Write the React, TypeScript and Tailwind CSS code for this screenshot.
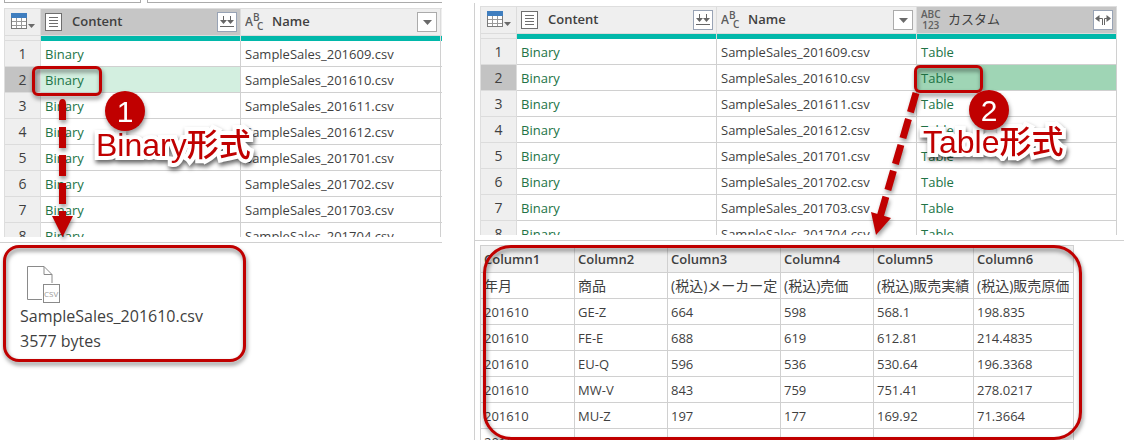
import React from 'react';
import clsx from 'clsx';

type ColumnKind = 'binary' | 'text' | 'any';

interface Column {
  key: string;
  title: string;
  kind: ColumnKind;
}

interface QueryGridProps {
  columns: Column[];
  selectedColumn: string;
  highlight: string;
  trailing?: boolean;
}

const months = ['201609', '201610', '201611', '201612', '201701', '201702', '201703', '201704'];

const contentColumn: Column = { key: 'content', title: 'Content', kind: 'binary' };
const nameColumn: Column = { key: 'name', title: 'Name', kind: 'text' };
const customColumn: Column = { key: 'custom', title: 'カスタム', kind: 'any' };

const previewRows = [
  ['年月', '商品', '(税込)メーカー定価', '(税込)売価', '(税込)販売実績', '(税込)販売原価'],
  ['201610', 'GE-Z', '664', '598', '568.1', '198.835'],
  ['201610', 'FE-E', '688', '619', '612.81', '214.4835'],
  ['201610', 'EU-Q', '596', '536', '530.64', '196.3368'],
  ['201610', 'MW-V', '843', '759', '751.41', '278.0217'],
  ['201610', 'MU-Z', '197', '177', '169.92', '71.3664'],
  ['201610', '', '', '', '', ''],
];

const TableMenuIcon = () => (
  <svg width="25" height="18" viewBox="0 0 25 18">
    <rect x="0.5" y="1.5" width="15" height="14" fill="#fff" stroke="#7a7a7a" />
    <path d="M5.500 5v10M10.500 5v10M1 8.500h14M1 12.500h14" stroke="#9a9a9a" />
    <rect x="0" y="0" width="16" height="5" fill="#3f7ebf" />
    <path d="M17 11h7l-3.500 4z" fill="#6a6a6a" />
  </svg>
);

const BinaryIcon = () => (
  <svg width="17" height="18" viewBox="0 0 17 18">
    <rect x="0.5" y="0.5" width="16" height="17" fill="#fff" stroke="#6e6e6e" />
    <path d="M4 4.500h9M4 7.500h9M4 10.500h9M4 13.500h9" stroke="#6e6e6e" />
  </svg>
);

const TextIcon = () => (
  <svg width="22" height="22" viewBox="0 0 22 22" className="font-semibold" fill="#5c5c5c">
    <text x="0" y="15" fontSize="12">A</text>
    <text x="8" y="10" fontSize="10">B</text>
    <text x="12" y="19" fontSize="10">C</text>
  </svg>
);

const KindIcon: React.FC<{ kind: ColumnKind }> = ({ kind }) => {
  if (kind === 'binary') return <BinaryIcon />;
  if (kind === 'text') return <TextIcon />;
  return (
    <span className="flex flex-col text-[10px] leading-[11px] font-semibold text-[#606060]">
      <span>ABC</span>
      <span>123</span>
    </span>
  );
};

const HeaderAction: React.FC<{ kind: ColumnKind }> = ({ kind }) => (
  <button
    type="button"
    aria-label="Column options"
    className={clsx(
      'ml-auto flex size-5 shrink-0 items-center justify-center border bg-white',
      kind === 'text' ? 'border-[#ababab]' : 'border-[#98a3b5]'
    )}
  >
    {kind === 'binary' && (
      <svg width="16" height="14" viewBox="0 0 16 14" fill="#666">
        <path d="M4 1h1v5h-1zM11 1h1v5h-1zM1 5h7l-3.500 4zM8 5h7l-3.500 4z" />
        <path d="M1 11h14v1H1z" />
      </svg>
    )}
    {kind === 'text' && (
      <svg width="9" height="5" viewBox="0 0 9 5">
        <path d="M0 0h9L4.500 5z" fill="#6a6a6a" />
      </svg>
    )}
    {kind === 'any' && (
      <svg width="16" height="12" viewBox="0 0 16 12">
        <path d="M0 4.500L4.500 1v7zM16 4.500L11.500 1v7z" fill="#666" />
        <path d="M4 4.500h3.500V11M9.500 11V4.500H12" fill="none" stroke="#666" />
      </svg>
    )}
  </button>
);

const QueryGrid: React.FC<QueryGridProps> = ({ columns, selectedColumn, highlight, trailing }) => {
  const cellText = (key: string, month: string) => {
    if (key === 'content') return 'Binary';
    if (key === 'custom') return 'Table';
    return `SampleSales_${month}.csv`;
  };

  return (
    <div className="h-[229px] overflow-hidden">
      <table
        className={clsx(
          'table-fixed border-separate border-spacing-0 border-t border-l border-[#dedede]',
          trailing ? 'w-full' : 'w-0'
        )}
      >
        <colgroup>
          <col className="w-9" />
          {columns.map((column) => (
            <col key={column.key} className="w-[200px]" />
          ))}
          {trailing && <col />}
        </colgroup>
        <thead>
          <tr className="h-[27px] bg-[#efefef]">
            <th className="border-r border-b border-[#dcdcdc] p-0">
              <button type="button" aria-label="Table menu" className="flex pl-1.5">
                <TableMenuIcon />
              </button>
            </th>
            {columns.map((column) => (
              <th
                key={column.key}
                className={clsx(
                  'border-r border-b border-[#dcdcdc] p-0',
                  column.key === selectedColumn && 'bg-[#c6c6c6]'
                )}
              >
                <div className="flex items-center pr-[3px] pl-1">
                  <span className="flex w-[27px] shrink-0">
                    <KindIcon kind={column.kind} />
                  </span>
                  <span className={column.kind === 'any' ? 'font-normal' : 'font-semibold'}>
                    {column.title}
                  </span>
                  <HeaderAction kind={column.kind} />
                </div>
              </th>
            ))}
            {trailing && <th className="border-b border-[#dcdcdc] p-0" />}
          </tr>
          <tr className="h-[5px]">
            <td className="border-r border-b border-[#dcdcdc] bg-[#efefef] p-0" />
            {columns.map((column) => (
              <td key={column.key} className="border-r border-[#dcdcdc] bg-[#01b8aa] p-0" />
            ))}
            {trailing && <td className="bg-[#01b8aa] p-0" />}
          </tr>
        </thead>
        <tbody>
          {months.map((month, index) => (
            <tr key={month} className="h-[26px]">
              <th
                className={clsx(
                  'border-r border-b border-[#dcdcdc] p-0 text-center text-[14px] leading-5 font-normal',
                  index === 1 ? 'bg-[#c3c3c3]' : 'bg-[#efefef]'
                )}
              >
                {index + 1}
              </th>
              {columns.map((column) => (
                <td
                  key={column.key}
                  className={clsx(
                    'border-r border-b border-[#d0d0d0] px-1 py-0 leading-5 whitespace-nowrap',
                    column.kind !== 'text' && 'text-[#217346]',
                    index === 1 && column.key === selectedColumn && highlight
                  )}
                >
                  {cellText(column.key, month)}
                </td>
              ))}
              {trailing && <td className="border-b border-[#d0d0d0] p-0" />}
            </tr>
          ))}
        </tbody>
      </table>
    </div>
  );
};

const PreviewTable = () => (
  <table className="w-[594px] table-fixed border-separate border-spacing-0 border-t border-l border-[#d0d0d0]">
    <colgroup>
      <col className="w-[94px]" />
      <col className="w-[93px]" />
      <col className="w-[113px]" />
      <col className="w-[93px]" />
      <col className="w-[100px]" />
      <col className="w-[100px]" />
    </colgroup>
    <thead>
      <tr className="h-[27px] bg-[#efefef]">
        {previewRows[0].map((_, index) => (
          <th
            key={index}
            className="border-r border-b border-[#d0d0d0] px-[3px] py-0 text-left leading-5 font-semibold"
          >
            Column{index + 1}
          </th>
        ))}
      </tr>
    </thead>
    <tbody>
      {previewRows.map((row, rowIndex) => (
        <tr key={rowIndex} className="h-[26px]">
          {row.map((value, index) => (
            <td key={index} className="border-r border-b border-[#d0d0d0] px-[3px] py-0">
              <div
                className={clsx(
                  'h-5 overflow-hidden leading-5 whitespace-nowrap',
                  rowIndex === 0 && 'text-[14px]'
                )}
              >
                {value}
              </div>
            </td>
          ))}
        </tr>
      ))}
    </tbody>
  </table>
);

const Frame: React.FC<{ className: string }> = ({ className }) => (
  <div
    className={clsx(
      'pointer-events-none absolute border-3 border-[#c00000] drop-shadow-[1px_3px_2px_rgba(0,0,0,0.5)]',
      className
    )}
  />
);

const StepBadge: React.FC<{ step: number; className: string }> = ({ step, className }) => (
  <span
    className={clsx(
      'absolute flex size-10 items-center justify-center rounded-full bg-[#c00000] font-["Liberation_Sans",sans-serif] text-[30px] text-white drop-shadow-[1px_3px_2px_rgba(0,0,0,0.4)]',
      className
    )}
  >
    {step}
  </span>
);

const Callout: React.FC<{ text: string; className: string }> = ({ text, className }) => (
  <span
    className={clsx(
      'absolute font-["Liberation_Sans","Noto_Sans_CJK_JP",sans-serif] text-[32px] leading-10 font-medium whitespace-nowrap text-[#c00000] drop-shadow-[1px_3px_2px_rgba(0,0,0,0.6)] [-webkit-text-stroke:8px_white] [paint-order:stroke_fill]',
      className
    )}
  >
    {text}
  </span>
);

const FileIcon = () => (
  <svg width="34" height="38" viewBox="0 0 34 38" fill="none" stroke="#8a8a8a">
    <path d="M15 33.500H0.500V0.500H17l8 8V17M17 0.500V8.500H25" />
    <rect x="16.500" y="18.500" width="16" height="18" fill="#fff" />
    <text x="17" y="31" fontSize="8" fill="#999" stroke="none">
      CSV
    </text>
  </svg>
);

const App = () => {
  return (
    <main className="flex h-screen gap-8 overflow-hidden bg-white font-['Open_Sans','Noto_Sans_CJK_JP',sans-serif] text-[13px] text-[#3f3f3f]">
      <section className="relative flex w-[442px] shrink-0 flex-col">
        <div className="flex h-2 gap-1.5 pl-1">
          <div className="h-[3px] w-[137px] border-x border-b border-[#ababab]" />
          <div className="h-[3px] flex-1 border-b border-l border-[#ababab]" />
        </div>
        <div className="pl-1">
          <QueryGrid
            columns={[contentColumn, nameColumn]}
            selectedColumn="content"
            highlight="bg-[#d3efe0]"
            trailing
          />
        </div>
        <div className="mt-[5px] flex-1 border-t border-[#d0d0d0] px-5 pt-[23px]">
          <div className="pl-[7px]">
            <FileIcon />
          </div>
          <p className="text-[16px] leading-[25px]">SampleSales_201610.csv</p>
          <p className="text-[16px] leading-[25px]">3577 bytes</p>
        </div>

        <Frame className="top-[66px] left-8 h-[30px] w-[70px] rounded-md" />
        <svg
          className="absolute top-[96px] left-[48px] drop-shadow-[1px_3px_2px_rgba(0,0,0,0.4)]"
          width="30"
          height="146"
          viewBox="0 0 30 146"
        >
          <path d="M11 8q0-5 3.500-5T18 8v16h-7z" fill="#c00000" />
          <path d="M14.500 31V122" stroke="#c00000" strokeWidth="7" strokeDasharray="21 7" />
          <path d="M4 120h21l-10.500 21z" fill="#c00000" />
        </svg>
        <Callout text="Binary形式" className="top-[125px] left-[96px]" />
        <StepBadge step={1} className="top-[91px] left-[105px]" />
        <Frame className="top-[245px] left-[3px] h-[117px] w-[243px] rounded-2xl" />
      </section>

      <section className="relative flex min-w-0 flex-1 flex-col pt-[3px]">
        <div className="border-l border-[#d0d0d0] pt-[3px] pl-[5px]">
          <QueryGrid
            columns={[contentColumn, nameColumn, customColumn]}
            selectedColumn="custom"
            highlight="bg-[#9fd5b5]"
          />
          <div className="h-[5px]" />
        </div>
        <div className="min-h-0 flex-1 overflow-hidden border-t border-l border-[#d0d0d0] pt-1 pl-[5px]">
          <PreviewTable />
        </div>

        <Frame className="top-[65px] left-[440px] h-[28px] w-[69px] rounded-md" />
        <svg
          className="absolute top-[88px] left-[392px] drop-shadow-[1px_3px_2px_rgba(0,0,0,0.4)]"
          width="60"
          height="152"
          viewBox="0 0 60 152"
        >
          <path
            d="M50 5L14 129"
            stroke="#c00000"
            strokeWidth="7"
            strokeDasharray="20 7"
          />
          <path d="M5 124l20 6L10 147z" fill="#c00000" />
        </svg>
        <Callout text="Table形式" className="top-[122px] left-[449px]" />
        <StepBadge step={2} className="top-[90px] left-[495px]" />
        <Frame className="top-[245px] left-[9px] h-[195px] w-[599px] rounded-[28px]" />
      </section>
    </main>
  );
};

export default App;
